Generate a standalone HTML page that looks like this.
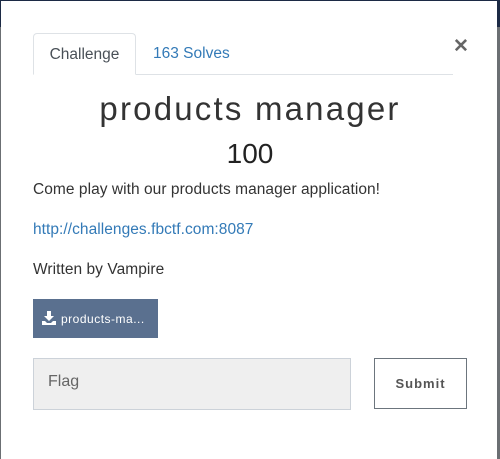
<!DOCTYPE html>
<html><head><style>
body{margin:0;width:500px;height:459px;background:#6b6f73;position:relative;overflow:hidden;font-family:"Liberation Sans",sans-serif}
.topbar{position:absolute;left:0;top:0;width:500px;height:27px;background:#1c2a45}
.modal{position:absolute;left:1px;top:1px;width:496px;height:458px;background:#fff}
.tabs{position:absolute;left:33px;top:33px;width:420px;height:41px;border-bottom:1px solid #dee2e6}
.tab1{position:absolute;left:0;top:0;width:103px;height:42px;border:1px solid #dee2e6;border-bottom:1px solid #fff;border-radius:4px 4px 0 0;box-sizing:border-box;color:#495057;font-size:15.5px;text-align:center;line-height:42px}
.tab2{position:absolute;left:120px;top:0;color:#337ab7;font-size:15.5px;line-height:42px}
.x{position:absolute;left:453px;top:35px;font-size:19px;color:#666;font-weight:bold}
h1{position:absolute;left:0;width:500px;top:90px;margin:0;text-align:center;font-weight:300;font-size:33px;letter-spacing:2.2px;color:#333}
h2{position:absolute;left:0;width:500px;top:138px;margin:0;text-align:center;font-weight:normal;font-size:28px;color:#222}
.p{position:absolute;left:33px;font-size:15.5px;letter-spacing:.05px;color:#333}
.btn{position:absolute;left:33px;top:299px;width:125px;height:39px;background:#5a708f;color:#fff;font-size:12px;line-height:40px;letter-spacing:.5px}
.inp{position:absolute;left:33px;top:358px;width:318px;height:52px;box-sizing:border-box;background:#efefef;border:1px solid #ccd2d9;color:#666;font-size:16px;padding-left:14px;line-height:46px}
.sub{position:absolute;left:374px;top:358px;width:93px;height:51px;box-sizing:border-box;border:1px solid #6c757d;color:#555;font-size:13px;font-weight:bold;letter-spacing:1px;text-align:center;line-height:50px}
</style></head><body>
<div class="topbar"></div>
<div class="modal"></div>
<div class="tabs"><div class="tab1">Challenge</div><div class="tab2">163 Solves</div></div>
<div class="x">✕</div>
<h1>products manager</h1>
<h2>100</h2>
<div class="p" style="top:181px">Come play with our products manager application!</div>
<div class="p" style="top:221px;color:#337ab7">http://challenges.fbctf.com:8087</div>
<div class="p" style="top:261px">Written by Vampire</div>
<div class="btn"><svg width="14" height="14" viewBox="0 0 14 14" style="position:absolute;left:9px;top:12px"><path d="M5 0h4v5h3l-5 5-5-5h3z M0 10h3l2 2h4l2-2h3v4H0z" fill="#fff"/></svg><span style="position:absolute;left:28px">products-ma...</span></div>
<div class="inp">Flag</div>
<div class="sub">Submit</div>
</body></html>
